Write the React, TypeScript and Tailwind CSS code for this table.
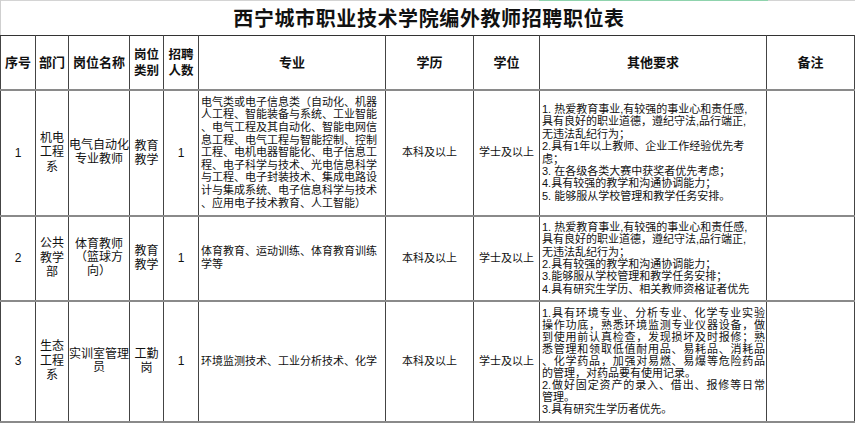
import React from "react";

type Row = {
  no: string;
  dept: string[];
  post: string[];
  kind: string[];
  count: string;
  major: string[];
  degree: string;
  level: string;
  other: string[];
  height: string;
  justify?: boolean;
};

const rows: Row[] = [
  {
    no: "1",
    dept: ["机电", "工程", "系"],
    post: ["电气自动化", "专业教师"],
    kind: ["教育", "教学"],
    count: "1",
    major: [
      "电气类或电子信息类（自动化、机器",
      "人工程、智能装备与系统、工业智能",
      "、电气工程及其自动化、智能电网信",
      "息工程、电气工程与智能控制、控制",
      "工程、电机电器智能化、电子信息工",
      "程、电子科学与技术、光电信息科学",
      "与工程、电子封装技术、集成电路设",
      "计与集成系统、电子信息科学与技术",
      "、应用电子技术教育、人工智能）",
    ],
    degree: "本科及以上",
    level: "学士及以上",
    other: [
      "1. 热爱教育事业,有较强的事业心和责任感,",
      "具有良好的职业道德，遵纪守法,品行端正,",
      "无违法乱纪行为；",
      "2.具有1年以上教师、企业工作经验优先考",
      "虑；",
      "3. 在各级各类大赛中获奖者优先考虑；",
      "4.具有较强的教学和沟通协调能力；",
      "5. 能够服从学校管理和教学任务安排。",
    ],
    height: "h-[126px]",
  },
  {
    no: "2",
    dept: ["公共", "教学", "部"],
    post: ["体育教师", "（篮球方", "向）"],
    kind: ["教育", "教学"],
    count: "1",
    major: ["体育教育、运动训练、体育教育训练", "学等"],
    degree: "本科及以上",
    level: "学士及以上",
    other: [
      "1. 热爱教育事业,有较强的事业心和责任感,",
      "具有良好的职业道德，遵纪守法,品行端正,",
      "无违法乱纪行为；",
      "2.具有较强的教学和沟通协调能力；",
      "3.能够服从学校管理和教学任务安排；",
      "4.具有研究生学历、相关教师资格证者优先",
    ],
    height: "h-[85px]",
  },
  {
    no: "3",
    dept: ["生态", "工程", "系"],
    post: ["实训室管理", "员"],
    kind: ["工勤", "岗"],
    count: "1",
    major: ["环境监测技术、工业分析技术、化学"],
    degree: "本科及以上",
    level: "学士及以上",
    other: [
      "1.具有环境专业、分析专业、化学专业实验",
      "操作功底，熟悉环境监测专业仪器设备，做",
      "到使用前认真检查，发现损坏及时报修；熟",
      "悉管理和领取低值耐用品、易耗品、消耗品",
      "、化学药品，加强对易燃、易爆等危险药品",
      "的管理，对药品要有使用记录。",
      "2.做好固定资产的录入、借出、报修等日常",
      "管理。",
      "3.具有研究生学历者优先。",
    ],
    height: "h-[121px]",
    justify: true,
  },
];

const Lines = ({ lines }: { lines: string[] }) => (
  <>
    {lines.map((l, i) => (
      <div key={i}>{l}</div>
    ))}
  </>
);

const td = "border-x border-x-[#444] border-y-2 border-y-[#8a8a8a] p-0 align-middle";
const th = `${td} border-t border-t-[#333]`;

export default function App() {
  return (
    <div className="w-[855px] h-[423px] overflow-hidden bg-white text-[#111] font-['Liberation_Sans','Noto_Sans_CJK_SC',sans-serif]">
      <div className="h-[35px] flex flex-col border-l border-[#cfcfcf]">
        <div className="flex h-px">
          <div className="w-[538px] bg-[#d4d4d4]" />
          <div className="w-[229px] bg-[#8fd3ad]" />
          <div className="flex-1 bg-[#d4d4d4]" />
        </div>
        <div className="flex-1 flex items-center justify-center">
          <h1 className="text-[20px] font-bold tracking-[0.6px] leading-none pl-[2px] font-['Noto_Sans_CJK_SC',sans-serif]">
            西宁城市职业技术学院编外教师招聘职位表
          </h1>
        </div>
      </div>
      <table className="table-fixed border-collapse w-[854px] border-l border-[#444]">
        <colgroup>
          <col className="w-[35px]" />
          <col className="w-[33px]" />
          <col className="w-[61px]" />
          <col className="w-[34px]" />
          <col className="w-[35px]" />
          <col className="w-[187px]" />
          <col className="w-[88px]" />
          <col className="w-[66px]" />
          <col className="w-[227px]" />
          <col className="w-[88px]" />
        </colgroup>
        <thead>
          <tr className="h-[54px] text-[13px] font-bold leading-[16px] text-center font-['Noto_Sans_CJK_SC',sans-serif]">
            <th className={th}>序号</th>
            <th className={th}>部门</th>
            <th className={th}>岗位名称</th>
            <th className={`${th} text-[12.5px]`}>
              <Lines lines={["岗位", "类别"]} />
            </th>
            <th className={`${th} text-[12.5px]`}>
              <Lines lines={["招聘", "人数"]} />
            </th>
            <th className={th}>专业</th>
            <th className={th}>学历</th>
            <th className={th}>学位</th>
            <th className={th}>其他要求</th>
            <th className={th}>备注</th>
          </tr>
        </thead>
        <tbody>
          {rows.map((r) => (
            <tr key={r.no} className={`${r.height} text-[12px]`}>
              <td className={`${td} text-center`}>{r.no}</td>
              <td className={`${td} text-center leading-[14.5px]`}>
                <Lines lines={r.dept} />
              </td>
              <td className={`${td} text-center leading-[13.5px]`}>
                <Lines lines={r.post} />
              </td>
              <td className={`${td} text-center leading-[14px]`}>
                <Lines lines={r.kind} />
              </td>
              <td className={`${td} text-center`}>{r.count}</td>
              <td className={`${td} pl-[2px] text-[11px] leading-[12.6px] whitespace-nowrap`}>
                <Lines lines={r.major} />
              </td>
              <td className={`${td} text-center text-[11px]`}>{r.degree}</td>
              <td className={`${td} text-center text-[11px]`}>{r.level}</td>
              <td
                className={`${td} pl-[2px] text-[11px] leading-[12.4px] whitespace-nowrap ${
                  r.justify ? "pr-[1px] text-[11.6px] leading-[12px]" : ""
                }`}
              >
                {r.other.map((l, i) => (
                  <div
                    key={i}
                    className={
                      r.justify && l.length > 15
                        ? "text-justify [text-align-last:justify] whitespace-normal"
                        : ""
                    }
                  >
                    {l}
                  </div>
                ))}
              </td>
              <td className={td}></td>
            </tr>
          ))}
        </tbody>
      </table>
    </div>
  );
}
